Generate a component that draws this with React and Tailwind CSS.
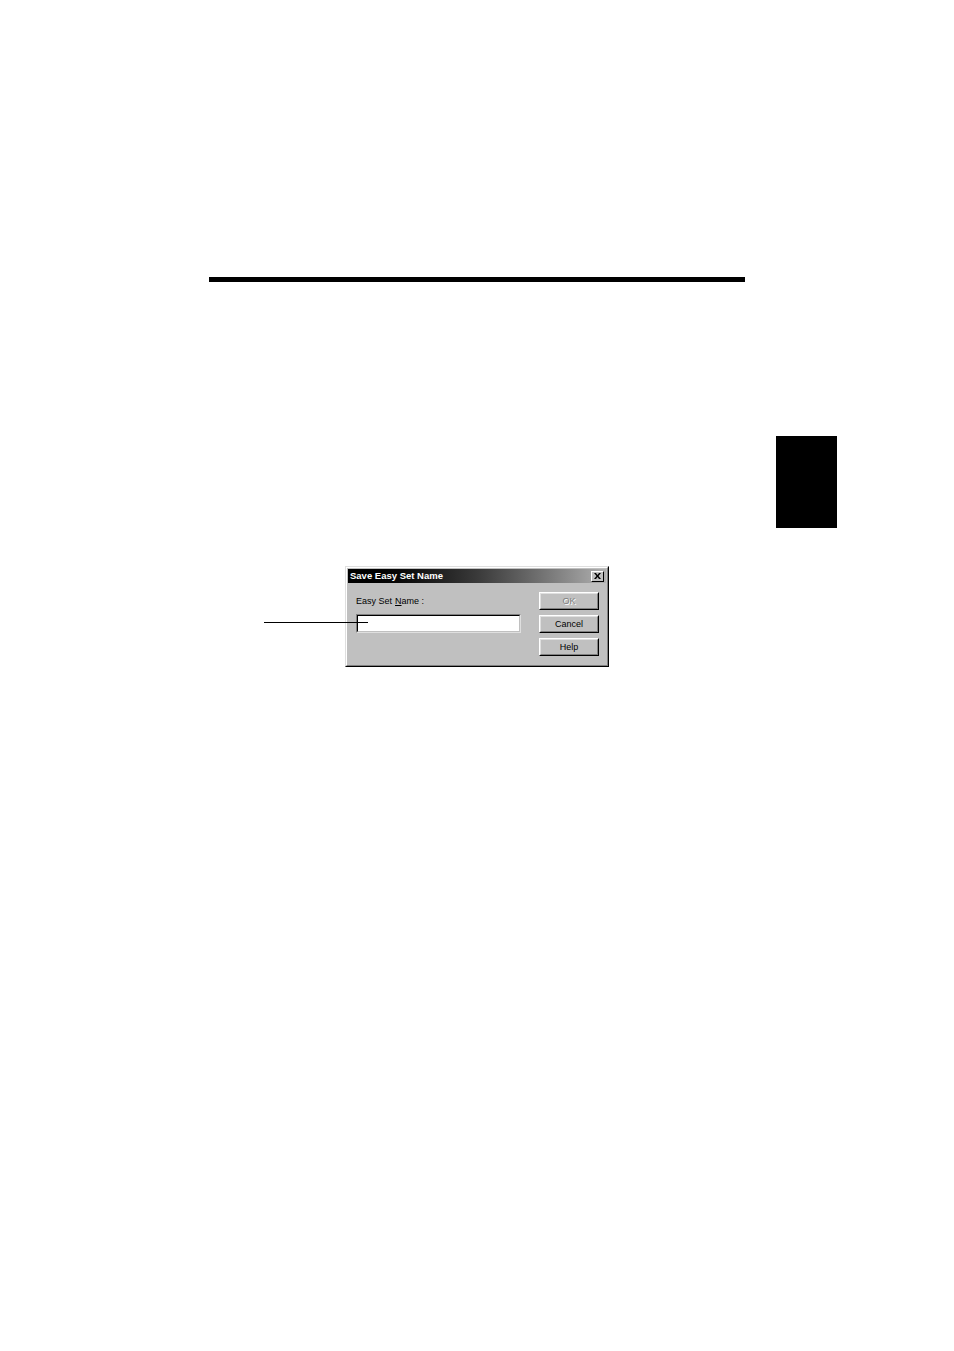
import React from 'react';

const font = { fontFamily: '"Liberation Sans", Arial, sans-serif' };

const Win95Button = ({ children, disabled }) => (
  <div className="w-[60px] h-[18px] bg-[#c0c0c0] border border-t-white border-l-white border-r-black border-b-black">
    <div className="w-full h-full border border-t-[#dfdfdf] border-l-[#dfdfdf] border-r-[#808080] border-b-[#808080] flex items-center justify-center">
      {disabled ? (
        <span className="text-[9px] text-[#808080] leading-none [text-shadow:1px_1px_0_#ffffff]">OK</span>
      ) : (
        <span className="text-[9px] text-black leading-none">{children}</span>
      )}
    </div>
  </div>
);

const SaveEasySetDialog = () => (
  <div className="w-[264px] h-[101px] bg-[#c0c0c0] border border-t-[#dfdfdf] border-l-[#dfdfdf] border-r-black border-b-black">
    <div className="h-full border border-t-white border-l-white border-r-[#808080] border-b-[#808080] px-[1px] pt-[1px]">
      {/* title bar */}
      <div className="h-[14px] flex items-center justify-between pl-[2px] pr-[2px] bg-gradient-to-r from-[#000000] via-[#3a3a3a] to-[#b0b0b0]">
        <span className="text-[9.5px] font-bold text-white leading-none">Save Easy Set Name</span>
        <div className="w-[13px] h-[11px] bg-[#c0c0c0] border border-t-white border-l-white border-r-black border-b-black flex items-center justify-center">
          <svg width="7" height="6" viewBox="0 0 7 6">
            <path d="M0 0 L2 0 L3.5 2 L5 0 L7 0 L4.5 3 L7 6 L5 6 L3.5 4 L2 6 L0 6 L2.5 3 Z" fill="#000" />
          </svg>
        </div>
      </div>

      <div className="flex pl-[8px] pt-[9px]">
        <div className="w-[165px]">
          <div className="h-[18px] flex items-center text-[9px] text-black leading-none">
            Easy Set <span className="underline ml-[3px]">N</span>ame :
          </div>
          <div className="mt-[4px] h-[19px] bg-white border border-t-[#808080] border-l-[#808080] border-r-[#dfdfdf] border-b-[#dfdfdf]">
            <div className="h-full border border-t-black border-l-black border-r-[#c0c0c0] border-b-[#c0c0c0]" />
          </div>
        </div>
        <div className="ml-[18px] flex flex-col gap-[5px]">
          <Win95Button disabled>OK</Win95Button>
          <Win95Button>Cancel</Win95Button>
          <Win95Button>Help</Win95Button>
        </div>
      </div>
    </div>
  </div>
);

export default function App() {
  return (
    <div className="w-[954px] h-[1351px] bg-white overflow-hidden" style={font}>
      <div className="pt-[277px] pl-[209px]">
        <div className="w-[536px] h-[5px] bg-black" />
      </div>

      <div className="mt-[154px] ml-[776px] w-[61px] h-[92px] bg-black" />

      <div className="mt-[38px] ml-[264px] relative flex">
        <div className="w-[81px]" />
        <SaveEasySetDialog />
        {/* callout leader line */}
        <div className="absolute left-0 top-[56px] w-[104px] h-[1px] bg-black" />
        <div className="absolute left-[93px] top-[50px] w-[1px] h-[14px] bg-black" />
      </div>
    </div>
  );
}
